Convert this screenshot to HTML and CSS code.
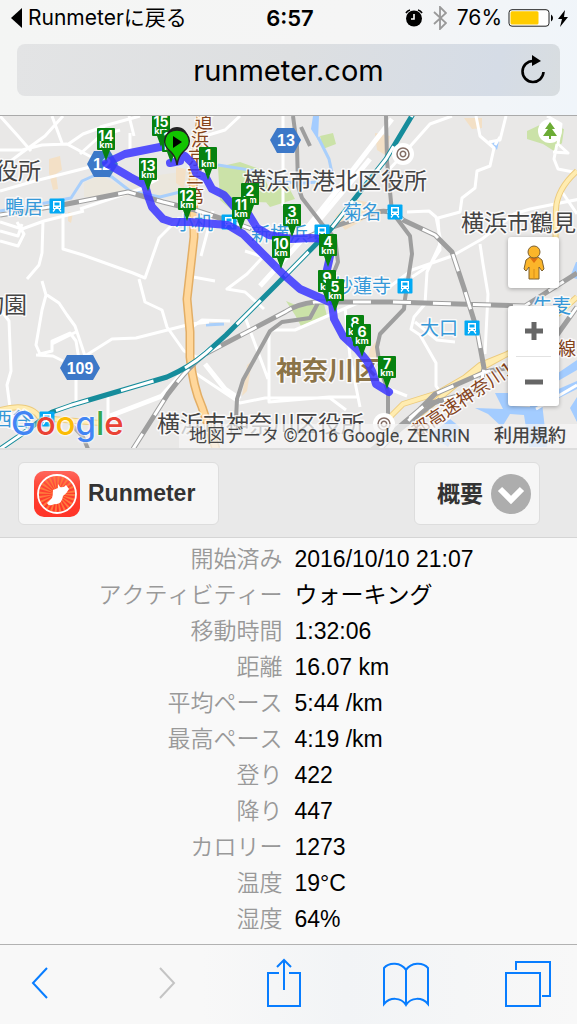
FILE: index.html
```html
<!DOCTYPE html>
<html lang="ja">
<head>
    <meta charset="UTF-8">
    <meta name="viewport" content="width=device-width, initial-scale=1.0">
    <title>Runmeter</title>
    <link rel="stylesheet" href="styles.css">
</head>
<body>
    <header class="browser-top">
        <div class="status-bar">
            <a href="#" class="back-app">
                <svg width="11" height="20" viewBox="0 0 11 20"><path d="M11 0v20L0 10z"/></svg>
                Runmeterに戻る
            </a>
            <span class="time">6:57</span>
            <div class="status-icons">
                <svg width="18" height="18" viewBox="0 0 18 18"><circle cx="9" cy="9.500" r="8"/><path d="M1 4a6 6 0 0 1 4-3M17 4a6 6 0 0 0-4-3" fill="none" stroke="#000" stroke-width="1.600"/><path d="M9 5v5H6" fill="none" stroke="#fff" stroke-width="1.600"/></svg>
                <svg class="bluetooth" width="14" height="24" viewBox="0 0 14 24"><path d="M1 6l12 11-6 6V1l6 6L1 18" fill="none" stroke="#999" stroke-width="1.800"/></svg>
                <span>76%</span>
                <svg width="61" height="18" viewBox="0 0 61 18"><rect x="1" y=".700" width="40" height="16.500" rx="3" fill="#fff" stroke="#222"/><rect x="2.500" y="2.300" width="28" height="13.300" rx="1.500" fill="#fc0"/><path d="M43 5.500q2 1 2 3.500t-2 3.500zM57 1l-7 9h4l-2 8 8-10h-4z"/></svg>
            </div>
        </div>
        <div class="address-bar">
            <input type="text" value="runmeter.com" aria-label="アドレス">
            <button type="button" class="reload" aria-label="再読み込み">
                <svg width="26" height="30" viewBox="0 0 26 30"><path d="M15 6h-2a10.500 10.500 0 1 0 10.500 11" fill="none" stroke="#000" stroke-width="2.600"/><path d="M12 0l9 6-9 5z"/></svg>
            </button>
        </div>
    </header>

    <main>
        <section class="map">
            <svg class="map-canvas" viewBox="0 116 577 334" preserveAspectRatio="xMidYMid slice">
                <defs>
                    <g id="pin"><path d="M-9-32q0-1 1-1H8q1 0 1 1v20q0 1-1 1H4L0 0-4-11h-4q-1 0-1-1z"/></g>
                    <g id="station"><rect x="-7.500" y="-7.500" width="15" height="15" rx="1" fill="#03a9f4"/><path d="M-4-5h8v8h-8z" fill="#fff"/><path d="M-2.500-3.500h5v3h-5z" fill="#03a9f4"/><path d="M-4 5.500l2-2.500M4 5.500L2 3" stroke="#fff" stroke-width="1.300"/><path d="M-3 1.500h1.500M1.500 1.500H3" stroke="#03a9f4"/></g>
                    <g id="office"><circle r="11" fill="#fff"/><circle r="6" fill="none" stroke="#846e66" stroke-width="1.500"/><circle r="2.700" fill="none" stroke="#846e66" stroke-width="1.500"/></g>
                </defs>
                <rect x="0" y="116" width="577" height="334" fill="#e9e8e7"/>

                <!-- land and water -->
                <path class="land" d="M84 184l16-8 22 12 22-10 44-6v30l-20-2-22-8-32 8-30-2z"/>
                <path class="sand" d="M49 160l11-3 2 14-6 4 2 15-5 1-4-17zM68 213l5 1-2 10-3-2zM335 218l18-18 22 5-8 14-22 12zM464 119h18v10l-10 1zM375 134l15 3-3 20-10-6zM176 168l10 2-2 20-8-6zM247 366l5-4-5 30-5 5zM370 350l8-10-2 28-12 5z"/>
                <path class="park" d="M218 168l22-5 22 8 8 22 17 2-2 9-30-1-15 15-20-17zM258 194l30-7 7 13-25 8zM320 137l13-3 3 11-13 5zM286 302l12 5 26-2 3 12-26 10-6-11zM527 132l17-8 20 6-2 14-8 8-11-7-16-5z"/>
                <path class="water" d="M491 141l8 1-2 9-4-5zM313 117h6l-1 24-7-11zM475 409l28 1-8-16h18v13l17 1-4-20 14-2 7 62h-18l-5-32-14-1-8 13-14-13zM558 374l19-13v10l-19 11zM540 398l37-16v8l-30 15zM577 398v25l-7-14zM576 263h1v17l-7-2zM430 436l20-16 10 8-12 20z"/>
                <path class="river" d="M0 212l40-7 31-6 11-17 18-8 12 4 18 14 30 6 28-7M318 138l11 22 3 14M218 166l38 6 18 11 30 1 28-2M206 326l18-1"/>

                <!-- streets -->
                <g class="street">
                    <path d="M63 117l-18 20-25 18-20 15M52 117l10 27M0 151l22 0 20-5 25-1 28 15M67 146l16-11 22-8M0 192l35-10 55-14M100 128l40-11M129 117l5 20M80 155l20-18 20-6M0 117l18 20 13 15M130 134v17M0 223l22 7 22-8 40-10M22 225l-4 12-18-5M43 222l-1 32-3 12-12 14M63 213v37l20 6 50 18 12 5 14-40 20-20M80 210l60-20 18-10M0 242l18 5 6-12-7-12"/>
                    <path d="M42 282l4 14-4 15-6 35 4 9 12-3 0-10 18-8 6 8 4 25M36 356l17 1 10 5M47 296l12 8 8 12 8 11 10 30M0 310l9 12 2 50-4 14 6 45M52 345l24-12M76 370v38M85 357l27-17 24-1 55-14 18-2M139 280l6 23 17 8 5 17 17 24 17 8M108 396v35"/>
                    <path d="M205 137l20-6 15-14M283 117l0 90M245 252l18 6-16 17-20 15 18 3 19 17M193 278l22 4M245 318l23 62M192 328l10-7 28 1M270 331h25l30-13 35-15M269 333v70l60-5 30 0M192 372l48 32 25-5 65 0 16 12M213 212l-12 45M345 308l5 50 10 50M372 360l5 25 30 12"/>
                    <path d="M452 117l-22 8-32 36-14 15M476 117l4 20 14 12-4 18-13 5-2 17-13 10-2 14-22 6 2 32-10 15-18 12M506 117l-6 24-11 2M495 146l5-8M547 117l14 8-3 20 10 9-15-1M557 145l-3 15 4 10 20 4M580 200l-50 10-16 5-32 25-30 17-40 14-32 24M407 213l22-1 7 6 5 25-14 30-2 32-11 13-3 12 9 6 16 28 0 23 14 20M415 323l22 18 18 2M480 245l3 20 5 30-3 60M560 190l17 25M536 410l41-24"/>
                    <path class="wide" d="M370 160l-60 72-50 55M110 417l52-20 30-33 26-20M392 120l-50 65-40 50M205 365l20 25 15 10"/>
                </g>
                <path class="road-case" d="M577 172q-20 18-21 38l-1 60M385 423l18-18 35-11 38-22 44-24 57-50M420 415l60-49 40-16M0 411q30-8 40 8l60 5"/>
                <path class="road" d="M577 172q-20 18-21 38l-1 60M385 423l18-18 35-11 38-22 44-24 57-50M420 415l60-49 40-16M0 411q30-8 40 8l60 5"/>
                <path class="highway-case" d="M201 116l-8 60 1 62-7 62 3 33v25q3 30 12 50l14 42"/>
                <path class="highway" d="M201 116l-8 60 1 62-7 62 3 33v25q3 30 12 50l14 42"/>

                <!-- railways -->
                <path class="rail thin" d="M301 128l9 19M293 117l4 30 1 40 4 12 20 26 13 14 3 24-6 15M236 420l1-20 6-19 27-49 12-9 28-4 8-15M386 117l1 45 5 51 18 24 2 18-7 45-1 10-24 25-3 13 3 20 8 25v22M70 424l13 14 5 12M440 400l-65 50"/>
                <path class="rail" d="M0 216l62-10 66-13 35 10 32 8 40 13 22 8 20 5 30 1 20-8 50-17q16-3 26 8l32 15 17 17 12 36 13 42 7 38-4 22q-30 8-55 15l-65 55M133 450l35-55q20-27 37-40l80-42q12-8 30-10h75l135 4 52-33M380 450l55-55 50-22 20-4 35-9 37-52"/>
                <path class="rail-dash" d="M0 216l62-10 66-13 35 10 32 8 40 13 22 8 20 5 30 1 20-8 50-17q16-3 26 8l32 15 17 17 12 36 13 42 7 38-4 22q-30 8-55 15l-65 55M133 450l35-55q20-27 37-40l80-42q12-8 30-10h75l135 4 52-33M380 450l55-55 50-22 20-4 35-9 37-52"/>
                <path class="express" d="M0 450l22-15 30-22 20-7 95-28q23-10 39-24l20-18 50-50 54-55 56-71 27-45"/>
                <path class="express-dash" d="M0 450l22-15 30-22 20-7 95-28q23-10 39-24l20-18 50-50 54-55 56-71 27-45"/>

                <!-- place names -->
                <g class="place">
                    <text x="-5" y="180">役所</text>
                    <text x="243" y="190">横浜市港北区役所</text>
                    <text x="461" y="232">横浜市鶴見</text>
                    <text x="-19" y="314">物園</text>
                    <text x="157" y="433">横浜市神奈川区役所</text>
                </g>
                <text class="ward" x="276" y="381">神奈川区</text>
                <g class="stop">
                    <text x="5" y="215">鴨居</text>
                    <text x="175" y="231">小机</text>
                    <text x="251" y="242">新横浜</text>
                    <text x="343" y="220">菊名</text>
                    <text x="334" y="294">妙蓮寺</text>
                    <text x="420" y="336">大口</text>
                    <text x="533" y="314">生麦</text>
                    <text x="-7" y="427">西谷</text>
                </g>
                <use href="#station" x="57" y="207"/>
                <use href="#station" x="229" y="223"/>
                <use href="#station" x="322" y="233"/>
                <use href="#station" x="395" y="213"/>
                <use href="#station" x="405" y="287"/>
                <use href="#station" x="472" y="329"/>
                <use href="#station" x="47" y="420"/>
                <use href="#office" x="403" y="155"/>
                <use href="#office" x="384" y="425"/>
                <g class="road-name">
                    <text x="186 186 188 191 195" y="204 184 165 147 129">第三京浜道</text>
                    <text transform="translate(417 439) rotate(-34)">都高速神奈川1</text>
                    <text x="558" y="356">線</text>
                </g>
                <circle cx="550" cy="132" r="12" fill="#fff"/>
                <path d="M550 123l5 7h-3l5 7h-6v3h-2v-3h-6l5-7h-3z" fill="#6cac35"/>
                <g class="shield">
                    <path d="M270 141l7-12h17l7 12-7 13h-17z"/><text x="286" y="147">13</text>
                    <path d="M60 369l7-13h26l7 13-7 12H67z"/><text x="80" y="375">109</text>
                    <path d="M87 165l7-13h16l8 13-8 13H94z"/><text x="102" y="171">12</text>
                </g>

                <!-- route -->
                <path class="route" d="M170 164L180 162 177 154 185 157 193 165 196 174 206 179 212 190 224 196 236 210 249 216 257 229 269 236 291 240 311 239 324 240 332 247 329 262 326 275 328 290 333 302"/>
                <path class="route" d="M170 146L125 155 106 164 130 178 145 186 148 197 152 208 163 220 172 223 190 223 228 226 243 235 262 254 283 275 300 290 332 304 334 320 343 337 357 350 367 362 372 372 376 385 389 393"/>
                <g class="pins">
                    <g transform="translate(161 148)"><use href="#pin"/><text y="-20">15</text><text class="unit" y="-13">km</text></g>
                    <g transform="translate(171 164)"><use href="#pin"/><text y="-20">16</text><text class="unit" y="-13">km</text></g>
                    <g transform="translate(106 162)"><use href="#pin"/><text y="-20">14</text><text class="unit" y="-13">km</text></g>
                    <g transform="translate(148 192)"><use href="#pin"/><text y="-20">13</text><text class="unit" y="-13">km</text></g>
                    <g transform="translate(208 181)"><use href="#pin"/><text y="-20">1</text><text class="unit" y="-13">km</text></g>
                    <g transform="translate(250 217)"><use href="#pin"/><text y="-20">2</text><text class="unit" y="-13">km</text></g>
                    <g transform="translate(187 222)"><use href="#pin"/><text y="-20">12</text><text class="unit" y="-13">km</text></g>
                    <g transform="translate(241 231)"><use href="#pin"/><text y="-20">11</text><text class="unit" y="-13">km</text></g>
                    <g transform="translate(292 238)"><use href="#pin"/><text y="-20">3</text><text class="unit" y="-13">km</text></g>
                    <g transform="translate(328 268)"><use href="#pin"/><text y="-20">4</text><text class="unit" y="-13">km</text></g>
                    <g transform="translate(281 270)"><use href="#pin"/><text y="-20">10</text><text class="unit" y="-13">km</text></g>
                    <g transform="translate(327 304)"><use href="#pin"/><text y="-20">9</text><text class="unit" y="-13">km</text></g>
                    <g transform="translate(335 313)"><use href="#pin"/><text y="-20">5</text><text class="unit" y="-13">km</text></g>
                    <g transform="translate(355 349)"><use href="#pin"/><text y="-20">8</text><text class="unit" y="-13">km</text></g>
                    <g transform="translate(362 358)"><use href="#pin"/><text y="-20">6</text><text class="unit" y="-13">km</text></g>
                    <g transform="translate(387 390)"><use href="#pin"/><text y="-20">7</text><text class="unit" y="-13">km</text></g>
                </g>
                <circle cx="177" cy="139" r="11" fill="#222"/>
                <path d="M177 166q-1-8-6-13c-12-9-5-22 6-22s18 13 6 22q-5 5-6 13z" fill="#12c400" stroke="#222" stroke-width="1.500"/>
                <path d="M173 137l9 6-9 6z"/>
            </svg>

            <div class="map-controls">
                <button type="button" class="pegman" aria-label="ストリートビュー">
                    <svg width="22" height="36" viewBox="0 0 22 36"><path d="M7 12l-4 3-2 9 2 2 3-4v12h10V22l3 4 2-2-2-9-4-3z" fill="#fbb52a" stroke="#7c6030"/><path d="M7 13l4 5 4-5z" fill="#e07010"/><circle cx="11" cy="7" r="6" fill="#fbb52a" stroke="#7c6030"/><path d="M11 24v10" stroke="#d98d18"/></svg>
                </button>
                <div class="zoom">
                    <button type="button" aria-label="拡大"><svg width="20" height="20" viewBox="0 0 20 20"><path d="M7.500 1h5v6.500H19v5h-6.500V19h-5v-6.500H1v-5h6.500z"/></svg></button>
                    <button type="button" aria-label="縮小"><svg width="20" height="20" viewBox="0 0 20 20"><path d="M1 7.500h18v5H1z"/></svg></button>
                </div>
            </div>
            <a href="#" class="google"><span class="blue">G</span><span class="red">o</span><span class="yellow">o</span><span class="blue">g</span><span class="green">l</span><span class="red">e</span></a>
            <div class="attribution">
                <span>地図データ ©2016 Google, ZENRIN</span>
                <a href="#">利用規約</a>
            </div>
        </section>

        <nav class="toolbar">
            <a href="#" class="btn">
                <svg width="46" height="46" viewBox="0 0 46 46">
                    <defs>
                        <linearGradient id="icon-red" x2="0" y2="1"><stop stop-color="#ff665c"/><stop offset=".4" stop-color="#ff4030"/><stop offset="1" stop-color="#ff3428"/></linearGradient>
                    </defs>
                    <rect width="46" height="46" rx="10" fill="url(#icon-red)"/>
                    <circle cx="23" cy="23" r="11" fill="none" stroke="#ff7a3c" stroke-width="14" stroke-dasharray="1.400 1.480"/>
                    <circle cx="23" cy="23" r="19" fill="none" stroke="#fff" stroke-width="1.800"/>
                    <path d="M24 13l2 3q4 1 6-2l3 4q-2 4-6 7-1 7-6 8-4 0-5 1-4 1-5-2l5-5q1-3 1-8l5-2z" fill="#fff"/>
                </svg>
                Runmeter
            </a>
            <div class="btn menu">
                <select aria-label="表示">
                    <option>概要</option>
                </select>
                <svg width="40" height="40" viewBox="0 0 40 40"><circle cx="20" cy="20" r="20" fill="#adadad"/><path d="M9 15l11 11 11-11" fill="none" stroke="#fff" stroke-width="6"/></svg>
            </div>
        </nav>

        <table class="stats">
            <tr><th scope="row">開始済み</th><td>2016/10/10 21:07</td></tr>
            <tr><th scope="row">アクティビティー</th><td>ウォーキング</td></tr>
            <tr><th scope="row">移動時間</th><td>1:32:06</td></tr>
            <tr><th scope="row">距離</th><td>16.07 km</td></tr>
            <tr><th scope="row">平均ペース</th><td>5:44 /km</td></tr>
            <tr><th scope="row">最高ペース</th><td>4:19 /km</td></tr>
            <tr><th scope="row">登り</th><td>422</td></tr>
            <tr><th scope="row">降り</th><td>447</td></tr>
            <tr><th scope="row">カロリー</th><td>1273</td></tr>
            <tr><th scope="row">温度</th><td>19°C</td></tr>
            <tr><th scope="row">湿度</th><td>64%</td></tr>
        </table>
    </main>

    <footer class="browser-bottom">
        <button type="button" aria-label="戻る"><svg width="18" height="34" viewBox="0 0 18 34"><path d="M16 2L2 17l14 15"/></svg></button>
        <button type="button" aria-label="進む" disabled><svg width="28" height="34" viewBox="0 0 28 34"><path d="M12 2l14 15-14 15"/></svg></button>
        <button type="button" aria-label="共有"><svg width="36" height="50" viewBox="0 0 36 50"><path d="M13 15H2v33h32V15H23M18 32V2M11 9l7-7 7 7"/></svg></button>
        <button type="button" aria-label="ブックマーク"><svg width="46" height="50" viewBox="0 0 46 50"><path d="M23 12C18 4 6 4 1 10v36c6-7 17-7 22 1 5-8 16-8 22-1V10C40 4 28 4 23 12v35"/></svg></button>
        <button type="button" aria-label="タブ"><svg width="46" height="50" viewBox="0 0 46 50"><path d="M1 15h34v33H1zM11 12V4h34v34h-8"/></svg></button>
    </footer>
</body>
</html>
```
FILE: styles.css
```css
* {
    margin: 0;
    padding: 0;
    box-sizing: border-box;
}

body {
    background-color: #f9f9f9;
    color: #000;
    font-family: "Liberation Sans", "Noto Sans CJK JP", sans-serif;
    min-height: 100vh;
    display: flex;
    flex-direction: column;
}

a {
    color: inherit;
    text-decoration: none;
}

button {
    border: none;
    background: none;
    display: flex;
    align-items: center;
    justify-content: center;
    cursor: pointer;
}

/* Browser top */
.browser-top {
    height: 116px;
    background: linear-gradient(100deg, #f4f5f4, #f5f5f5 60%, #f0f5fa);
    border-bottom: 1px solid #aaa;
    font-family: Inter, "Noto Sans CJK JP", sans-serif;
}

.status-bar {
    height: 44px;
    padding: 0 8px 8px 11px;
    display: grid;
    grid-template-columns: 1fr auto 1fr;
    align-items: center;
    font-size: 21px;
    line-height: 28px;
}

.back-app,
.status-icons {
    display: flex;
    align-items: center;
    gap: 6px;
    white-space: nowrap;
}

.status-icons {
    justify-content: flex-end;
}

.bluetooth {
    margin: 0 4px;
}

.time {
    font-weight: 600;
    font-size: 22px;
}

.address-bar {
    height: 52px;
    margin: 0 17px;
    padding: 0 14px;
    display: flex;
    align-items: center;
    border-radius: 8px;
    background: linear-gradient(100deg, #e3e4e5, #dddfe1 50%, #d5dce6 88%, #d8dde0);
}

.address-bar input {
    flex: 1;
    min-width: 0;
    padding-left: 26px;
    border: none;
    outline: none;
    background: transparent;
    font-family: inherit;
    font-size: 29px;
    text-align: center;
}

/* Map */
.map {
    position: relative;
    height: 334px;
    overflow: hidden;
    border-bottom: 2px solid #ddd;
}

.map-canvas {
    display: block;
    width: 100%;
    height: 100%;
    font-family: "Noto Sans CJK JP", sans-serif;
}

.land { fill: #ebe7dd; }
.sand { fill: #f3e0c6; }
.park { fill: #cbe2a8; }
.water { fill: #a3ccff; }

.map-canvas .river,
.street,
.road-case,
.road,
.highway-case,
.highway,
.rail,
.rail-dash,
.express,
.express-dash,
.route {
    fill: none;
    stroke-linejoin: round;
}

.river { stroke: #a9cffb; stroke-width: 3px; }
.street { stroke: #fff; stroke-width: 3px; }
.wide { stroke-width: 5px; }
.road-case { stroke: #eccb7e; stroke-width: 6px; }
.road { stroke: #ffecb0; stroke-width: 4px; }
.highway-case { stroke: #e3ae65; stroke-width: 9px; }
.highway { stroke: #ffd79b; stroke-width: 6px; }
.rail { stroke: #9e9e9e; stroke-width: 5px; }
.rail.thin { stroke-width: 4px; }
.rail-dash { stroke: #fff; stroke-width: 3px; stroke-dasharray: 18 22; }
.express { stroke: #168c9b; stroke-width: 5px; }
.express-dash { stroke: #fff; stroke-width: 3px; stroke-dasharray: 34 34; }

.route {
    stroke: #3a35ff;
    stroke-opacity: 0.85;
    stroke-width: 8px;
    stroke-linecap: round;
}

.place,
.stop,
.ward,
.road-name {
    paint-order: stroke;
    stroke: #fff;
    stroke-opacity: 0.8;
    stroke-width: 3px;
    stroke-linejoin: round;
}

.place { fill: #444; font-size: 23px; }
.stop { fill: #3698d8; font-size: 19px; }
.ward { fill: #8b7448; font-size: 26px; font-weight: 700; }
.road-name { fill: #85441b; font-size: 18px; }

.shield path { fill: #3c78c8; }

.shield text,
.pins text {
    fill: #fff;
    font-family: "Liberation Sans", sans-serif;
    font-size: 16px;
    font-weight: 700;
    text-anchor: middle;
}

.pins { fill: #078210; }

.pins text {
    font-family: Inter, sans-serif;
    font-size: 14px;
}

.pins .unit {
    font-size: 9px;
}

.map-controls {
    position: absolute;
    top: 121px;
    right: 18px;
    display: flex;
    flex-direction: column;
    gap: 18px;
}

.pegman,
.zoom {
    width: 51px;
    border-radius: 3px;
    background-color: #fff;
    box-shadow: 0 1px 4px rgba(0, 0, 0, 0.3);
}

.pegman {
    height: 51px;
}

.zoom button {
    width: 35px;
    height: 50px;
    margin: 0 auto;
    fill: #666;
}

.zoom button + button {
    border-top: 1px solid #e2e2e2;
}

.google {
    position: absolute;
    left: 11px;
    bottom: 3px;
    font-family: Inter, sans-serif;
    font-size: 33px;
    font-weight: 500;
    line-height: 44px;
    text-shadow: 0 0 2px #fff, 0 0 2px #fff, 0 0 3px #fff;
}

.blue { color: #4285f4; }
.red { color: #ea4335; }
.yellow { color: #fbbc05; }
.green { color: #34a853; }

.attribution {
    position: absolute;
    right: 0;
    bottom: 0;
    display: flex;
    padding: 0 11px 0 10px;
    gap: 24px;
    background-color: rgba(245, 245, 245, 0.75);
    color: #444;
    font-family: Roboto, "Noto Sans CJK JP", sans-serif;
    font-size: 18px;
    line-height: 24px;
    white-space: nowrap;
}

.attribution a {
    font-weight: 500;
}

/* Page toolbar */
.toolbar {
    height: 88px;
    padding: 0 37px 0 18px;
    display: flex;
    justify-content: space-between;
    align-items: center;
    background-color: #e9e9e9;
    border-bottom: 1px solid #d5d5d5;
}

.btn {
    height: 63px;
    padding: 0 23px 0 15px;
    display: flex;
    align-items: center;
    gap: 8px;
    background-color: #f6f6f6;
    border: 1px solid #ddd;
    border-radius: 6px;
    color: #333;
    font-size: 23px;
    font-weight: 700;
}

.btn.menu {
    padding: 0 8px 0 22px;
}

.menu select {
    appearance: none;
    border: none;
    outline: none;
    background: transparent;
    color: inherit;
    font: inherit;
}

/* Workout details */
.stats {
    width: 100%;
    margin-top: 3px;
    border-collapse: collapse;
    table-layout: fixed;
    font-size: 23px;
    font-kerning: none;
    line-height: 36px;
}

.stats th {
    padding-right: 6px;
    color: #999;
    font-weight: 350;
    text-align: right;
}

.stats td {
    padding-left: 6px;
}

/* Browser bottom */
.browser-bottom {
    height: 80px;
    margin-top: auto;
    padding: 0 19px 4px 10px;
    display: flex;
    justify-content: space-between;
    align-items: center;
    background: linear-gradient(90deg, #f8f8f8 35%, #f2f4f6 60%, #f8f8f8);
    border-top: 1px solid #b2b2b2;
}

.browser-bottom button {
    width: 60px;
    height: 60px;
}

.browser-bottom svg {
    fill: none;
    stroke: #087dff;
    stroke-width: 2px;
}

.browser-bottom button:disabled svg {
    stroke: #c4c4c4;
}
```
